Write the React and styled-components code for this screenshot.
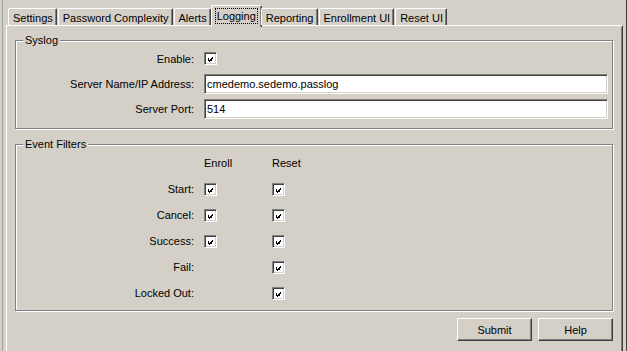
import React from "react";
import styled, { createGlobalStyle } from "styled-components";

const GlobalStyle = createGlobalStyle`
  html, body {
    margin: 0;
    padding: 0;
    background: #d4d0c8;
  }
  * {
    box-sizing: border-box;
  }
`;

const Window = styled.div`
  width: 627px;
  height: 351px;
  overflow: hidden;
  padding-left: 2px;
  border-right: 1px solid #404040;
  background: #d4d0c8;
  font-family: "Liberation Sans", Arial, sans-serif;
  font-size: 11px;
  color: #000;
`;

const Frame = styled.div`
  height: 100%;
  border-left: 1px solid #a0a0a0;
  padding: 0 3px;
  display: flex;
  flex-direction: column;
`;

const TabStrip = styled.div`
  display: flex;
  align-items: flex-end;
  height: 20px;
  margin-top: 5px;
  padding-left: 2px;
  position: relative;
  z-index: 1;
`;

const Tab = styled.div`
  height: ${(p) => (p.active ? "22px" : "17px")};
  margin: ${(p) => (p.active ? "0 -1px -2px -1px" : "0 1px 0 0")};
  padding: ${(p) => (p.active ? "0 4px 2px" : "1px 3px 0 4px")};
  display: flex;
  align-items: center;
  background: #d4d0c8;
  border-left: 1px solid #fff;
  border-top: 1px solid #fff;
  border-right: 1px solid #404040;
  border-radius: 2px 2px 0 0;
  box-shadow: inset -1px 0 0 #808080;
  white-space: nowrap;
`;

const Focus = styled.span`
  outline: 1px dotted #000;
  outline-offset: 0;
  padding: 0 1px;
  line-height: 14px;
`;

const Panel = styled.div`
  flex: 1;
  border-top: 1px solid #fff;
  border-left: 1px solid #fff;
  border-right: 1px solid #404040;
  box-shadow: inset 0 1px 0 #d4d0c8, inset -1px 0 0 #808080;
  padding: 14px 9px 0 8px;
`;

const Group = styled.div`
  position: relative;
  border: 1px solid #808080;
  box-shadow: inset 1px 1px 0 #fff, 1px 1px 0 #fff;
  padding: ${(p) => p.pad};
  margin-top: ${(p) => p.mt || "0"};
`;

const GroupTitle = styled.span`
  position: absolute;
  top: -8px;
  left: 7px;
  padding: 0 2px;
  background: #d4d0c8;
  line-height: 14px;
`;

const FormGrid = styled.div`
  display: grid;
  grid-template-columns: ${(p) => p.cols};
  grid-auto-rows: ${(p) => p.row};
  column-gap: 10px;
  align-items: center;
  padding-right: 4px;
`;

const Label = styled.span`
  text-align: right;
  white-space: nowrap;
`;

const Header = styled.span``;

const TextBox = styled.div`
  height: 20px;
  background: #fff;
  border: 1px solid;
  border-color: #808080 #fff #fff #808080;
  box-shadow: inset 1px 1px 0 #404040, inset -1px -1px 0 #d4d0c8;
  padding: 0 3px 0 2px;
  display: flex;
  align-items: center;
  white-space: nowrap;
`;

const Box = styled.span`
  width: 13px;
  height: 13px;
  display: inline-flex;
  vertical-align: middle;
  background: #fff;
  border: 1px solid;
  border-color: #808080 #fff #fff #808080;
  box-shadow: inset 1px 1px 0 #404040, inset -1px -1px 0 #d4d0c8;
  padding: 2px;
`;

const Cell = styled.span`
  display: flex;
  align-items: center;
`;

const ButtonRow = styled.div`
  display: flex;
  justify-content: flex-end;
  gap: 6px;
  margin-top: 7px;
`;

const Button = styled.button`
  width: 75px;
  height: 23px;
  padding: 0;
  background: #d4d0c8;
  font: inherit;
  color: #000;
  border: 1px solid;
  border-color: #fff #404040 #404040 #fff;
  box-shadow: inset -1px -1px 0 #808080;
`;

function Check() {
  return (
    <Box>
      <svg width="9" height="9" viewBox="0 0 9 9" shapeRendering="crispEdges">
        <path
          fill="#000"
          d="M7 1h1v1h-1zM6 2h2v1h-2zM1 3h1v1h-1zM5 3h3v1h-3zM1 4h2v1h-2zM4 4h3v1h-3zM1 5h5v1h-5zM2 6h3v1h-3zM3 7h1v1h-1z"
        />
      </svg>
    </Box>
  );
}

const tabs = [
  "Settings",
  "Password Complexity",
  "Alerts",
  "Logging",
  "Reporting",
  "Enrollment UI",
  "Reset UI",
];

const filters = [
  { name: "Start", enroll: true, reset: true },
  { name: "Cancel", enroll: true, reset: true },
  { name: "Success", enroll: true, reset: true },
  { name: "Fail", enroll: false, reset: true },
  { name: "Locked Out", enroll: false, reset: true },
];

export default function App() {
  return (
    <>
      <GlobalStyle />
      <Window>
        <Frame>
          <TabStrip>
            {tabs.map((t) =>
              t === "Logging" ? (
                <Tab key={t} active>
                  <Focus>{t}</Focus>
                </Tab>
              ) : (
                <Tab key={t}>{t}</Tab>
              )
            )}
          </TabStrip>
          <Panel>
            <Group pad="5px 0 7px 0">
              <GroupTitle>Syslog</GroupTitle>
              <FormGrid cols="178px 1fr" row="25px">
                <Label>Enable:</Label>
                <Cell>
                  <Check />
                </Cell>
                <Label>Server Name/IP Address:</Label>
                <TextBox>cmedemo.sedemo.passlog</TextBox>
                <Label>Server Port:</Label>
                <TextBox>514</TextBox>
              </FormGrid>
            </Group>
            <Group pad="5px 0 4px 0" mt="15px">
              <GroupTitle>Event Filters</GroupTitle>
              <FormGrid cols="178px 58px 1fr" row="26px">
                <span />
                <Header>Enroll</Header>
                <Header>Reset</Header>
                {filters.map((f) => (
                  <React.Fragment key={f.name}>
                    <Label>{f.name}:</Label>
                    <Cell>{f.enroll && <Check />}</Cell>
                    <Cell>{f.reset && <Check />}</Cell>
                  </React.Fragment>
                ))}
              </FormGrid>
            </Group>
            <ButtonRow>
              <Button>Submit</Button>
              <Button>Help</Button>
            </ButtonRow>
          </Panel>
        </Frame>
      </Window>
    </>
  );
}
